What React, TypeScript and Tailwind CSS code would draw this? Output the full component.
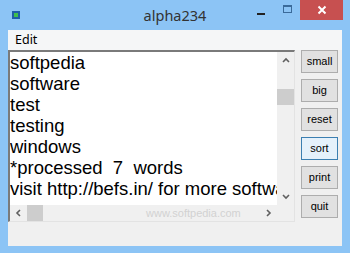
import React from "react";

const lines = [
  "softpedia",
  "software",
  "test",
  "testing",
  "windows",
  "*processed  7  words",
  "visit http://befs.in/ for more software",
];

const buttons = ["small", "big", "reset", "sort", "print", "quit"];

const Chevron = ({ dir }: { dir: "up" | "down" | "left" | "right" }) => {
  const paths: Record<string, string> = {
    up: "M1 5 L4 2 L7 5",
    down: "M1 2 L4 5 L7 2",
    left: "M5 1 L2 4 L5 7",
    right: "M2 1 L5 4 L2 7",
  };
  return (
    <svg width="8" height="8" viewBox="0 0 8 8">
      <path d={paths[dir]} fill="none" stroke="#606060" strokeWidth="1.6" />
    </svg>
  );
};

export default function App() {
  return (
    <div className="w-[350px] h-[253px] bg-[#8cc4f5] flex flex-col overflow-hidden relative">
      {/* title bar */}
      <div className="h-[30px] flex items-start relative">
        <div className="ml-[12px] mt-[11px] w-[8px] h-[8px] bg-[#1f5fa8] flex items-center justify-center">
          <div className="w-[4px] h-[4px] bg-[#3fc04a]" />
        </div>
        <div
          className="absolute left-0 right-0 top-[5px] text-center text-[14.5px] text-[#333]"
          style={{ fontFamily: '"Noto Sans", sans-serif' }}
        >
          alpha234
        </div>
        <div className="ml-auto flex items-start">
          <div className="w-[25px] h-[20px] flex items-center justify-center">
            <div className="w-[8px] h-[2px] bg-[#222] mt-[7px] -ml-[4px]" />
          </div>
          <div className="w-[25px] h-[20px] flex items-center justify-center">
            <div className="w-[9px] h-[8px] border border-[#3a6a9a] border-t-2 -mt-[2px]" />
          </div>
          <div className="w-[43px] h-[20px] bg-[#c75050] flex items-center justify-center mr-[7px]">
            <svg width="10" height="10" viewBox="0 0 10 10">
              <path d="M1.5 1.5 L8.5 8.5 M8.5 1.5 L1.5 8.5" stroke="#fff" strokeWidth="2" />
            </svg>
          </div>
        </div>
      </div>

      {/* client */}
      <div className="mx-[8px] h-[216px] bg-[#f0f0f0] flex flex-col">
        <div
          className="h-[20px] bg-[#f5f6f7] flex items-center px-[7px] text-[12.5px] text-black"
          style={{ fontFamily: '"Noto Sans", sans-serif' }}
        >
          Edit
        </div>
        <div className="flex">
          {/* edit box */}
          <div className="w-[287px] h-[172px] border-t-2 border-l-2 border-t-[#7a7a7a] border-l-[#7a7a7a] border-r border-b border-r-[#e3e3e3] border-b-[#e3e3e3] bg-white grid grid-cols-[1fr_17px] grid-rows-[1fr_16px]">
            <div
              className="overflow-hidden text-[18.5px] leading-[21px] text-black whitespace-pre"
              style={{ fontFamily: '"Liberation Sans", Arial, sans-serif' }}
            >
              {lines.map((l) => (
                <div key={l}>{l}</div>
              ))}
            </div>
            <div className="bg-[#f0f0f0] flex flex-col items-center">
              <div className="h-[17px] flex items-center justify-center">
                <Chevron dir="up" />
              </div>
              <div className="w-[17px] h-[16px] bg-[#cdcdcd] mt-[20px]" />
              <div className="mt-auto h-[17px] flex items-center justify-center">
                <Chevron dir="down" />
              </div>
            </div>
            <div className="bg-[#f0f0f0] flex items-center">
              <div className="w-[17px] h-[16px] flex items-center justify-center">
                <Chevron dir="left" />
              </div>
              <div className="w-[16px] h-[16px] bg-[#cdcdcd]" />
              <div className="ml-auto w-[17px] h-[16px] flex items-center justify-center">
                <Chevron dir="right" />
              </div>
            </div>
            <div className="bg-[#f0f0f0]" />
          </div>

          {/* buttons */}
          <div className="ml-[6px] flex flex-col gap-[6px]">
            {buttons.map((b) => (
              <div
                key={b}
                className={`w-[37px] h-[23px] flex items-center justify-center text-[11px] text-black border ${
                  b === "sort" ? "border-[#3c7fb1] bg-[#e5f1fb]" : "border-[#adadad] bg-[#e1e1e1]"
                }`}
                style={{ fontFamily: '"Liberation Sans", Arial, sans-serif' }}
              >
                {b}
              </div>
            ))}
          </div>
        </div>
      </div>

      {/* watermark */}
      <div
        className="absolute left-[146px] top-[205px] text-[11px] text-[#d2d2d2] pointer-events-none"
        style={{ fontFamily: '"Liberation Sans", sans-serif' }}
      >
        www.softpedia.com
      </div>
    </div>
  );
}
